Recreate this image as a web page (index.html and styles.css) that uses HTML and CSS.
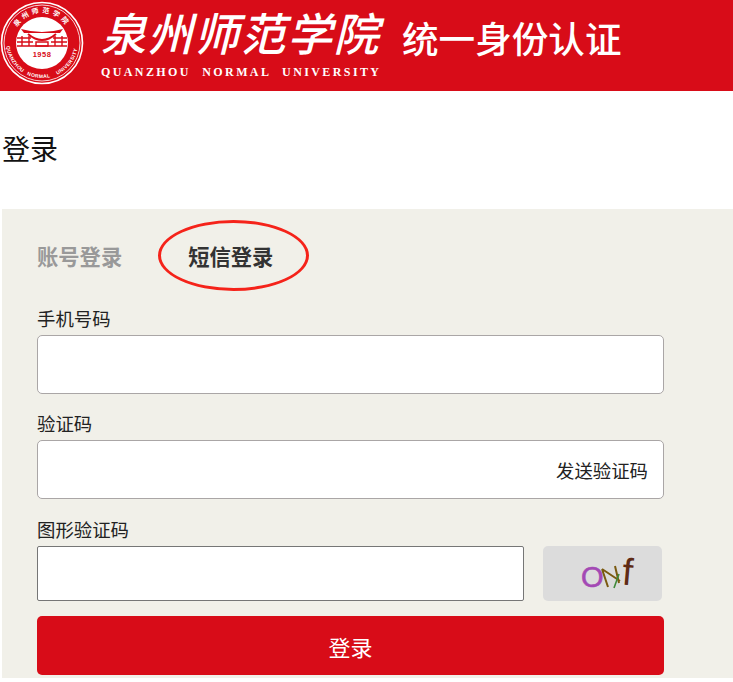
FILE: index.html
```html
<!DOCTYPE html>
<html lang="zh-CN">
<head>
    <meta charset="UTF-8">
    <title>统一身份认证</title>
    <link rel="stylesheet" href="styles.css">
</head>
<body>
    <div class="header">
        <svg class="seal" width="86" height="91" viewBox="0 0 86 91">
            <defs>
                <path id="seal-top" d="M13 42 A29 29 0 0 1 71 42"></path>
                <path id="seal-bottom" d="M6 42 A36 36 0 0 0 78 42"></path>
            </defs>
            <circle cx="42" cy="43" r="40.5" fill="none" stroke="#fff" stroke-width="1.6"></circle>
            <circle cx="42" cy="43" r="38" fill="none" stroke="#fff" stroke-width="0.8"></circle>
            <circle cx="42" cy="43" r="26" fill="#fff"></circle>
            <text class="seal-cn"><textPath href="#seal-top" startOffset="50%" text-anchor="middle">泉州师范学院</textPath></text>
            <text class="seal-en"><textPath href="#seal-bottom" startOffset="18%" text-anchor="middle">QUANZHOU</textPath></text>
            <text class="seal-en"><textPath href="#seal-bottom" startOffset="47%" text-anchor="middle">NORMAL</textPath></text>
            <text class="seal-en"><textPath href="#seal-bottom" startOffset="79%" text-anchor="middle">UNIVERSITY</textPath></text>
            <path d="M21 29 Q42 35 63 29 L60 33 H24 Z" fill="#d80c18"></path>
            <path d="M28 34 Q42 46 56 34" fill="none" stroke="#d80c18" stroke-width="2"></path>
            <path d="M17 38 H31 M53 38 H67 M17 42 H33 M51 42 H67 M17 46 H67" stroke="#d80c18" stroke-width="1.6"></path>
            <path d="M22 36 V46 M29 36 V46 M55 36 V46 M62 36 V46 M36 42 H48 V46 H36 Z" fill="none" stroke="#d80c18" stroke-width="1.4"></path>
            <text class="seal-year" x="42" y="57" text-anchor="middle">1958</text>
        </svg>
        <div class="brand">
            <div class="brand-cn">泉州师范学院</div>
            <div class="brand-en">QUANZHOU NORMAL UNIVERSITY</div>
        </div>
        <div class="system-name">统一身份认证</div>
    </div>

    <h1 class="page-title">登录</h1>

    <div class="panel">
        <div class="tabs">
            <span class="tab">账号登录</span>
            <span class="tab active">短信登录</span>
        </div>

        <label class="field-label">手机号码</label>
        <input class="text-input" type="text">

        <label class="field-label second">验证码</label>
        <div class="code-box">
            <span class="send-code">发送验证码</span>
        </div>

        <label class="field-label third">图形验证码</label>
        <div class="captcha-row">
            <input class="captcha-input" type="text">
            <div class="captcha">
                <svg width="119" height="55" viewBox="0 0 119 55">
                    <text class="cap-o" x="38" y="41">O</text>
                    <path d="M59 23 L65 41 M59 23 L77 35 M72 20 L76 37" fill="none" stroke="#7a5a10" stroke-width="2"></path>
                    <path d="M76 28 L71 42" fill="none" stroke="#3f8a3a" stroke-width="1.6"></path>
                    <text class="cap-f" x="79" y="39" transform="rotate(5 84 30)">f</text>
                </svg>
            </div>
        </div>

        <button class="login-btn">登录</button>
    </div>
</body>
</html>
```

FILE: styles.css
```css
body {
    margin: 0;
    height: 682px;
    overflow: hidden;
    background: #fff;
    font-family: "Liberation Sans", "Noto Sans CJK SC", sans-serif;
    color: #222;
}
.header {
    height: 91px;
    background: #d80c18;
    display: flex;
    color: #fff;
}
.seal {
    flex: none;
}
.seal-cn {
    font-size: 7px;
    font-weight: 700;
    fill: #fff;
    letter-spacing: 3px;
}
.seal-en {
    font-size: 5px;
    font-weight: 700;
    fill: #fff;
    letter-spacing: 0.4px;
}
.seal-year {
    font-size: 7.5px;
    font-weight: 700;
    fill: #d80c18;
    letter-spacing: 0.5px;
}
.brand {
    margin-left: 15px;
    width: 290px;
}
.brand-cn {
    margin-top: 4px;
    height: 56px;
    font-family: "Noto Sans CJK SC", sans-serif;
    font-size: 45px;
    line-height: 56px;
    font-weight: 500;
    letter-spacing: 1.5px;
    white-space: nowrap;
    font-style: italic;
}
.brand-en {
    margin-top: 5px;
    font-family: "Liberation Serif", serif;
    font-size: 12px;
    line-height: 14px;
    font-weight: 700;
    letter-spacing: 2.4px;
    word-spacing: 6px;
    white-space: nowrap;
}
.system-name {
    margin: 13px 0 0 11px;
    font-family: "Noto Sans CJK SC", sans-serif;
    font-size: 36.6px;
    line-height: 50px;
    font-weight: 500;
    white-space: nowrap;
}
.page-title {
    margin: 0;
    padding: 40px 0 0 2px;
    height: 78px;
    font-size: 28px;
    line-height: 40px;
    font-weight: 400;
    color: #111;
}
.panel {
    margin-left: 2px;
    height: 469px;
    padding: 0 69px 0 35px;
    background: #f1f0e9;
}
.tabs {
    position: relative;
    display: flex;
    gap: 66px;
    padding-top: 33px;
    height: 53px;
}
.tab {
    font-size: 21.3px;
    line-height: 32px;
    font-weight: 700;
    color: #999;
}
.tab.active {
    position: relative;
    color: #333;
}
.tab.active::after {
    content: "";
    position: absolute;
    left: -30px;
    top: -22px;
    width: 145px;
    height: 65px;
    border: 3px solid #f5231a;
    border-radius: 50%;
}
.field-label {
    display: block;
    font-size: 18.4px;
    line-height: 26px;
    margin-top: 12px;
    margin-bottom: 2px;
    color: #222;
}
.field-label.second {
    margin-top: 18px;
}
.field-label.third {
    margin-top: 19px;
}
.text-input,
.code-box {
    display: flex;
    box-sizing: border-box;
    width: 627px;
    height: 59px;
    background: #fff;
    border: 1px solid #aaa6a6;
    border-radius: 5px;
}
.code-box {
    justify-content: flex-end;
    align-items: center;
    padding-right: 15px;
}
.send-code {
    font-size: 18.4px;
    color: #222;
}
.captcha-row {
    display: flex;
    gap: 19px;
}
.captcha-input {
    box-sizing: border-box;
    width: 487px;
    height: 55px;
    background: #fff;
    border: 1px solid #767676;
    border-radius: 2px;
}
.captcha {
    width: 119px;
    height: 55px;
    background: #dcdcdc;
    border-radius: 5px;
}
.cap-o {
    font-size: 29px;
    fill: #a349b4;
    stroke: #a349b4;
    stroke-width: 0.6px;
}
.cap-f {
    font-size: 38px;
    fill: #5e2a14;
}
.login-btn {
    display: block;
    width: 627px;
    height: 59px;
    margin-top: 15px;
    border: none;
    border-radius: 5px;
    background: #d80c18;
    color: #fff;
    font-family: inherit;
    font-size: 22px;
}
```
